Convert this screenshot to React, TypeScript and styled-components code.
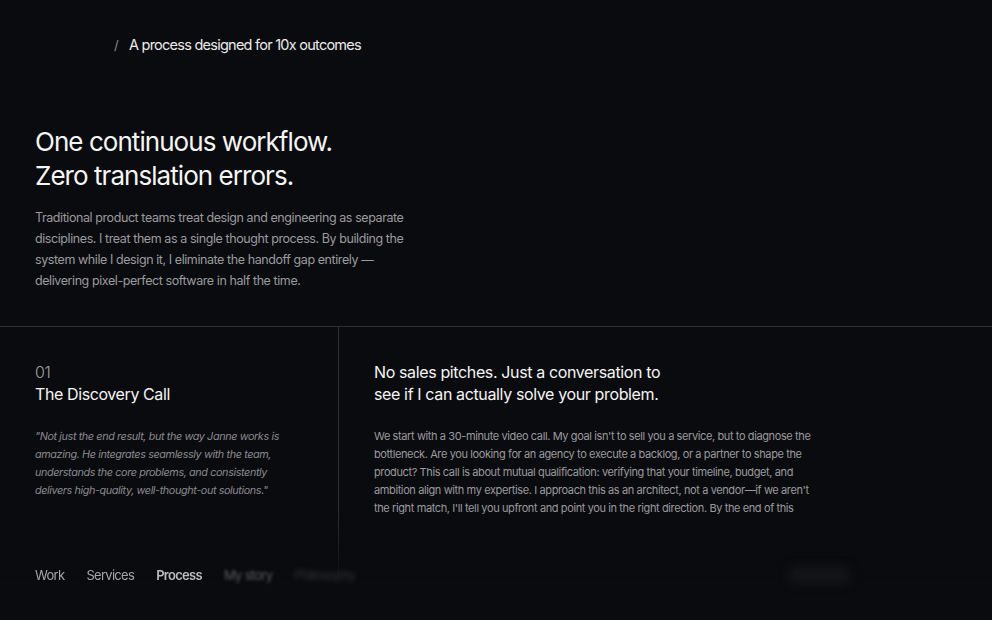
import React from 'react';
import styled, { createGlobalStyle } from 'styled-components';

const GlobalStyle = createGlobalStyle`
  html, body {
    margin: 0;
    padding: 0;
    background: #0a0b0e;
    color: #f2f2f2;
    font-family: Inter, "Noto Sans", "Liberation Sans", sans-serif;
    -webkit-font-smoothing: antialiased;
  }
  * { box-sizing: border-box; }
`;

const leadLines = [
  'Traditional product teams treat design and engineering as separate',
  'disciplines. I treat them as a single thought process. By building the',
  'system while I design it, I eliminate the handoff gap entirely —',
  'delivering pixel-perfect software in half the time.',
];

const quoteLines = [
  '"Not just the end result, but the way Janne works is',
  'amazing. He integrates seamlessly with the team,',
  'understands the core problems, and consistently',
  'delivers high-quality, well-thought-out solutions."',
];

const bodyLines = [
  "We start with a 30-minute video call. My goal isn't to sell you a service, but to diagnose the",
  'bottleneck. Are you looking for an agency to execute a backlog, or a partner to shape the',
  'product? This call is about mutual qualification: verifying that your timeline, budget, and',
  "ambition align with my expertise. I approach this as an architect, not a vendor—if we aren't",
  "the right match, I'll tell you upfront and point you in the right direction. By the end of this",
];

const navItems = [
  { label: 'Work', state: 'idle' },
  { label: 'Services', state: 'idle' },
  { label: 'Process', state: 'active' },
  { label: 'My story', state: 'faded' },
  { label: 'Philosophy', state: 'hidden' },
] as const;

type NavState = (typeof navItems)[number]['state'];

// Renders pre-broken copy so every line keeps its set measure.
const Lines = ({ lines }: { lines: readonly string[] }) => (
  <>
    {lines.map((line, i) => (
      <React.Fragment key={i}>
        {line}
        {i < lines.length - 1 && <br />}
      </React.Fragment>
    ))}
  </>
);

export default function App() {
  return (
    <>
      <GlobalStyle />
      <Page>
        <Breadcrumb>
          <Slash>/</Slash>
          <span>A process designed for 10x outcomes</span>
        </Breadcrumb>

        <Intro>
          <Headline>
            One continuous workflow.
            <br />
            Zero translation errors.
          </Headline>
          <Lead>
            <Lines lines={leadLines} />
          </Lead>
        </Intro>

        <Step>
          <StepAside>
            <StepNumber>01</StepNumber>
            <StepTitle>The Discovery Call</StepTitle>
            <Quote>
              <Lines lines={quoteLines} />
            </Quote>
          </StepAside>
          <StepBody>
            <StepHeading>
              No sales pitches. Just a conversation to
              <br />
              see if I can actually solve your problem.
            </StepHeading>
            <BodyText>
              <Lines lines={bodyLines} />
            </BodyText>
          </StepBody>
        </Step>
      </Page>

      <BottomBar>
        <Nav>
          {navItems.map((item) => (
            <NavLink key={item.label} $state={item.state}>
              {item.label}
            </NavLink>
          ))}
        </Nav>
        <GhostButton />
      </BottomBar>
    </>
  );
}

const Page = styled.main`
  height: 100vh;
  overflow: hidden;
  display: flex;
  flex-direction: column;
`;

const Breadcrumb = styled.div`
  display: flex;
  align-items: center;
  gap: 11px;
  padding: 35px 0 0 114px;
  font-size: 14.5px;
  line-height: 20px;
  color: #ececec;
  letter-spacing: -0.75px;
`;

const Slash = styled.span`
  color: #8a8a8a;
  font-size: 13px;
`;

const Intro = styled.section`
  padding: 70px 35px 35px;
`;

const Headline = styled.h1`
  margin: 0;
  font-size: 26px;
  line-height: 34px;
  font-weight: 400;
  letter-spacing: -0.95px;
  color: #f5f5f5;
`;

const Lead = styled.p`
  margin: 14px 0 0;
  font-size: 12.5px;
  line-height: 21px;
  white-space: nowrap;
  color: #9b9b9f;
  letter-spacing: -0.42px;
`;

const Step = styled.section`
  flex: 1;
  display: grid;
  grid-template-columns: 339px 1fr;
  border-top: 1px solid #2f3034;
`;

const StepAside = styled.div`
  padding: 34px 35px 0;
  border-right: 1px solid #2f3034;
`;

const StepNumber = styled.div`
  font-size: 16px;
  line-height: 22px;
  font-weight: 300;
  letter-spacing: -0.3px;
  color: #a0a0a4;
`;

const StepTitle = styled.h2`
  margin: 0;
  font-size: 16px;
  line-height: 22px;
  font-weight: 400;
  letter-spacing: -0.4px;
  color: #f5f5f5;
`;

const Quote = styled.p`
  margin: 23px 0 0;
  font-size: 10.8px;
  line-height: 18px;
  font-style: italic;
  white-space: nowrap;
  letter-spacing: -0.38px;
  color: #8a8a8e;
`;

const StepBody = styled.div`
  padding: 34px 35px 0;
`;

const StepHeading = styled.h3`
  margin: 0;
  font-size: 16px;
  line-height: 22px;
  font-weight: 400;
  letter-spacing: -0.37px;
  color: #f5f5f5;
`;

const BodyText = styled.p`
  margin: 22px 0 0;
  font-size: 11px;
  line-height: 18px;
  white-space: nowrap;
  letter-spacing: -0.39px;
  color: #9a9a9e;
`;

const BottomBar = styled.footer`
  position: fixed;
  left: 0;
  right: 0;
  bottom: 0;
  height: 108px;
  display: flex;
  align-items: center;
  justify-content: space-between;
  padding: 18px 142px 0 35px;
  background: linear-gradient(
    to bottom,
    rgba(10, 11, 14, 0) 0%,
    rgba(10, 11, 14, 0.75) 48%,
    rgba(10, 11, 14, 1) 66%
  );
`;

const Nav = styled.nav`
  display: flex;
  gap: 22px;
`;

const NavLink = styled.a<{ $state: NavState }>`
  font-size: 13px;
  line-height: 18px;
  letter-spacing: -0.7px;
  color: ${({ $state }) =>
    $state === 'active' ? '#bdbdc0' : $state === 'idle' ? '#a6a6aa' : '#5a5a5e'};
  font-weight: ${({ $state }) => ($state === 'active' ? 600 : 400)};
  filter: ${({ $state }) =>
    $state === 'faded' ? 'blur(1.6px)' : $state === 'hidden' ? 'blur(2.4px)' : 'none'};
  opacity: ${({ $state }) => ($state === 'hidden' ? 0.5 : 1)};
`;

const GhostButton = styled.div`
  width: 62px;
  height: 18px;
  border-radius: 6px;
  background: #131417;
  filter: blur(4px);
`;
